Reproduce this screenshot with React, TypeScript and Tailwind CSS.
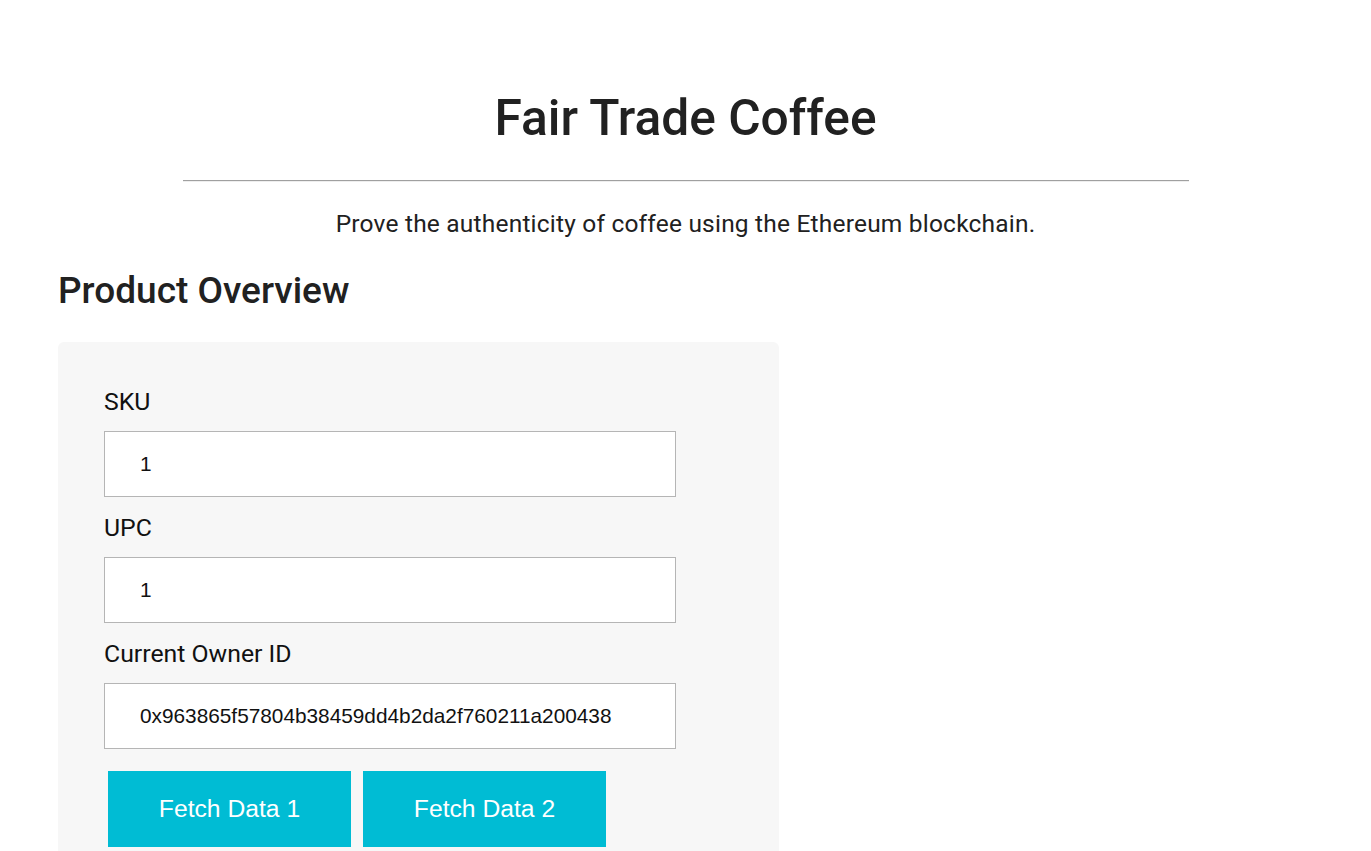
import React from "react";

const fields = [
  { label: "SKU", value: "1" },
  { label: "UPC", value: "1" },
  { label: "Current Owner ID", value: "0x963865f57804b38459dd4b2da2f760211a200438" },
];

const App = () => {
  return (
    <div className="min-h-screen bg-white text-[#212121] font-['Roboto',sans-serif]">
      <header className="pt-[88px] text-center">
        <h1 className="text-[49.7px] leading-[60px] font-medium">Fair Trade Coffee</h1>
        <hr className="mx-auto mt-[32px] w-[1006px] border-0 border-t border-t-[#a0a0a0] border-b border-b-[#eeeeee]" />
        <p className="mt-[27px] text-[24.5px] leading-[30px] tracking-[0.2px]">
          Prove the authenticity of coffee using the Ethereum blockchain.
        </p>
      </header>

      <main className="px-[58px]">
        <h2 className="mt-[28px] text-[37px] leading-[48px] font-medium">Product Overview</h2>

        <section className="mt-[27px] w-[721px] rounded-md bg-[#f7f7f7] px-[46px] pt-[45px] pb-[40px]">
          {fields.map((f) => (
            <div key={f.label} className="mb-[16px]">
              <label className="block text-[24.8px] leading-[30px] text-[#111]">{f.label}</label>
              <input
                readOnly
                value={f.value}
                className="mt-[14px] block h-[66px] w-[572px] border border-[#b5b5b5] bg-white pl-[35px] text-[20.8px] text-[#111] outline-none font-['Liberation_Sans',Arial,sans-serif]"
              />
            </div>
          ))}
          <div className="flex gap-[12px] pl-[4px] pt-[6px]">
            <button className="h-[76px] w-[243px] bg-[#00bcd4] text-[24.7px] text-white font-['Liberation_Sans',Arial,sans-serif]">
              Fetch Data 1
            </button>
            <button className="h-[76px] w-[243px] bg-[#00bcd4] text-[24.7px] text-white font-['Liberation_Sans',Arial,sans-serif]">
              Fetch Data 2
            </button>
          </div>
        </section>
      </main>
    </div>
  );
};

export default App;
